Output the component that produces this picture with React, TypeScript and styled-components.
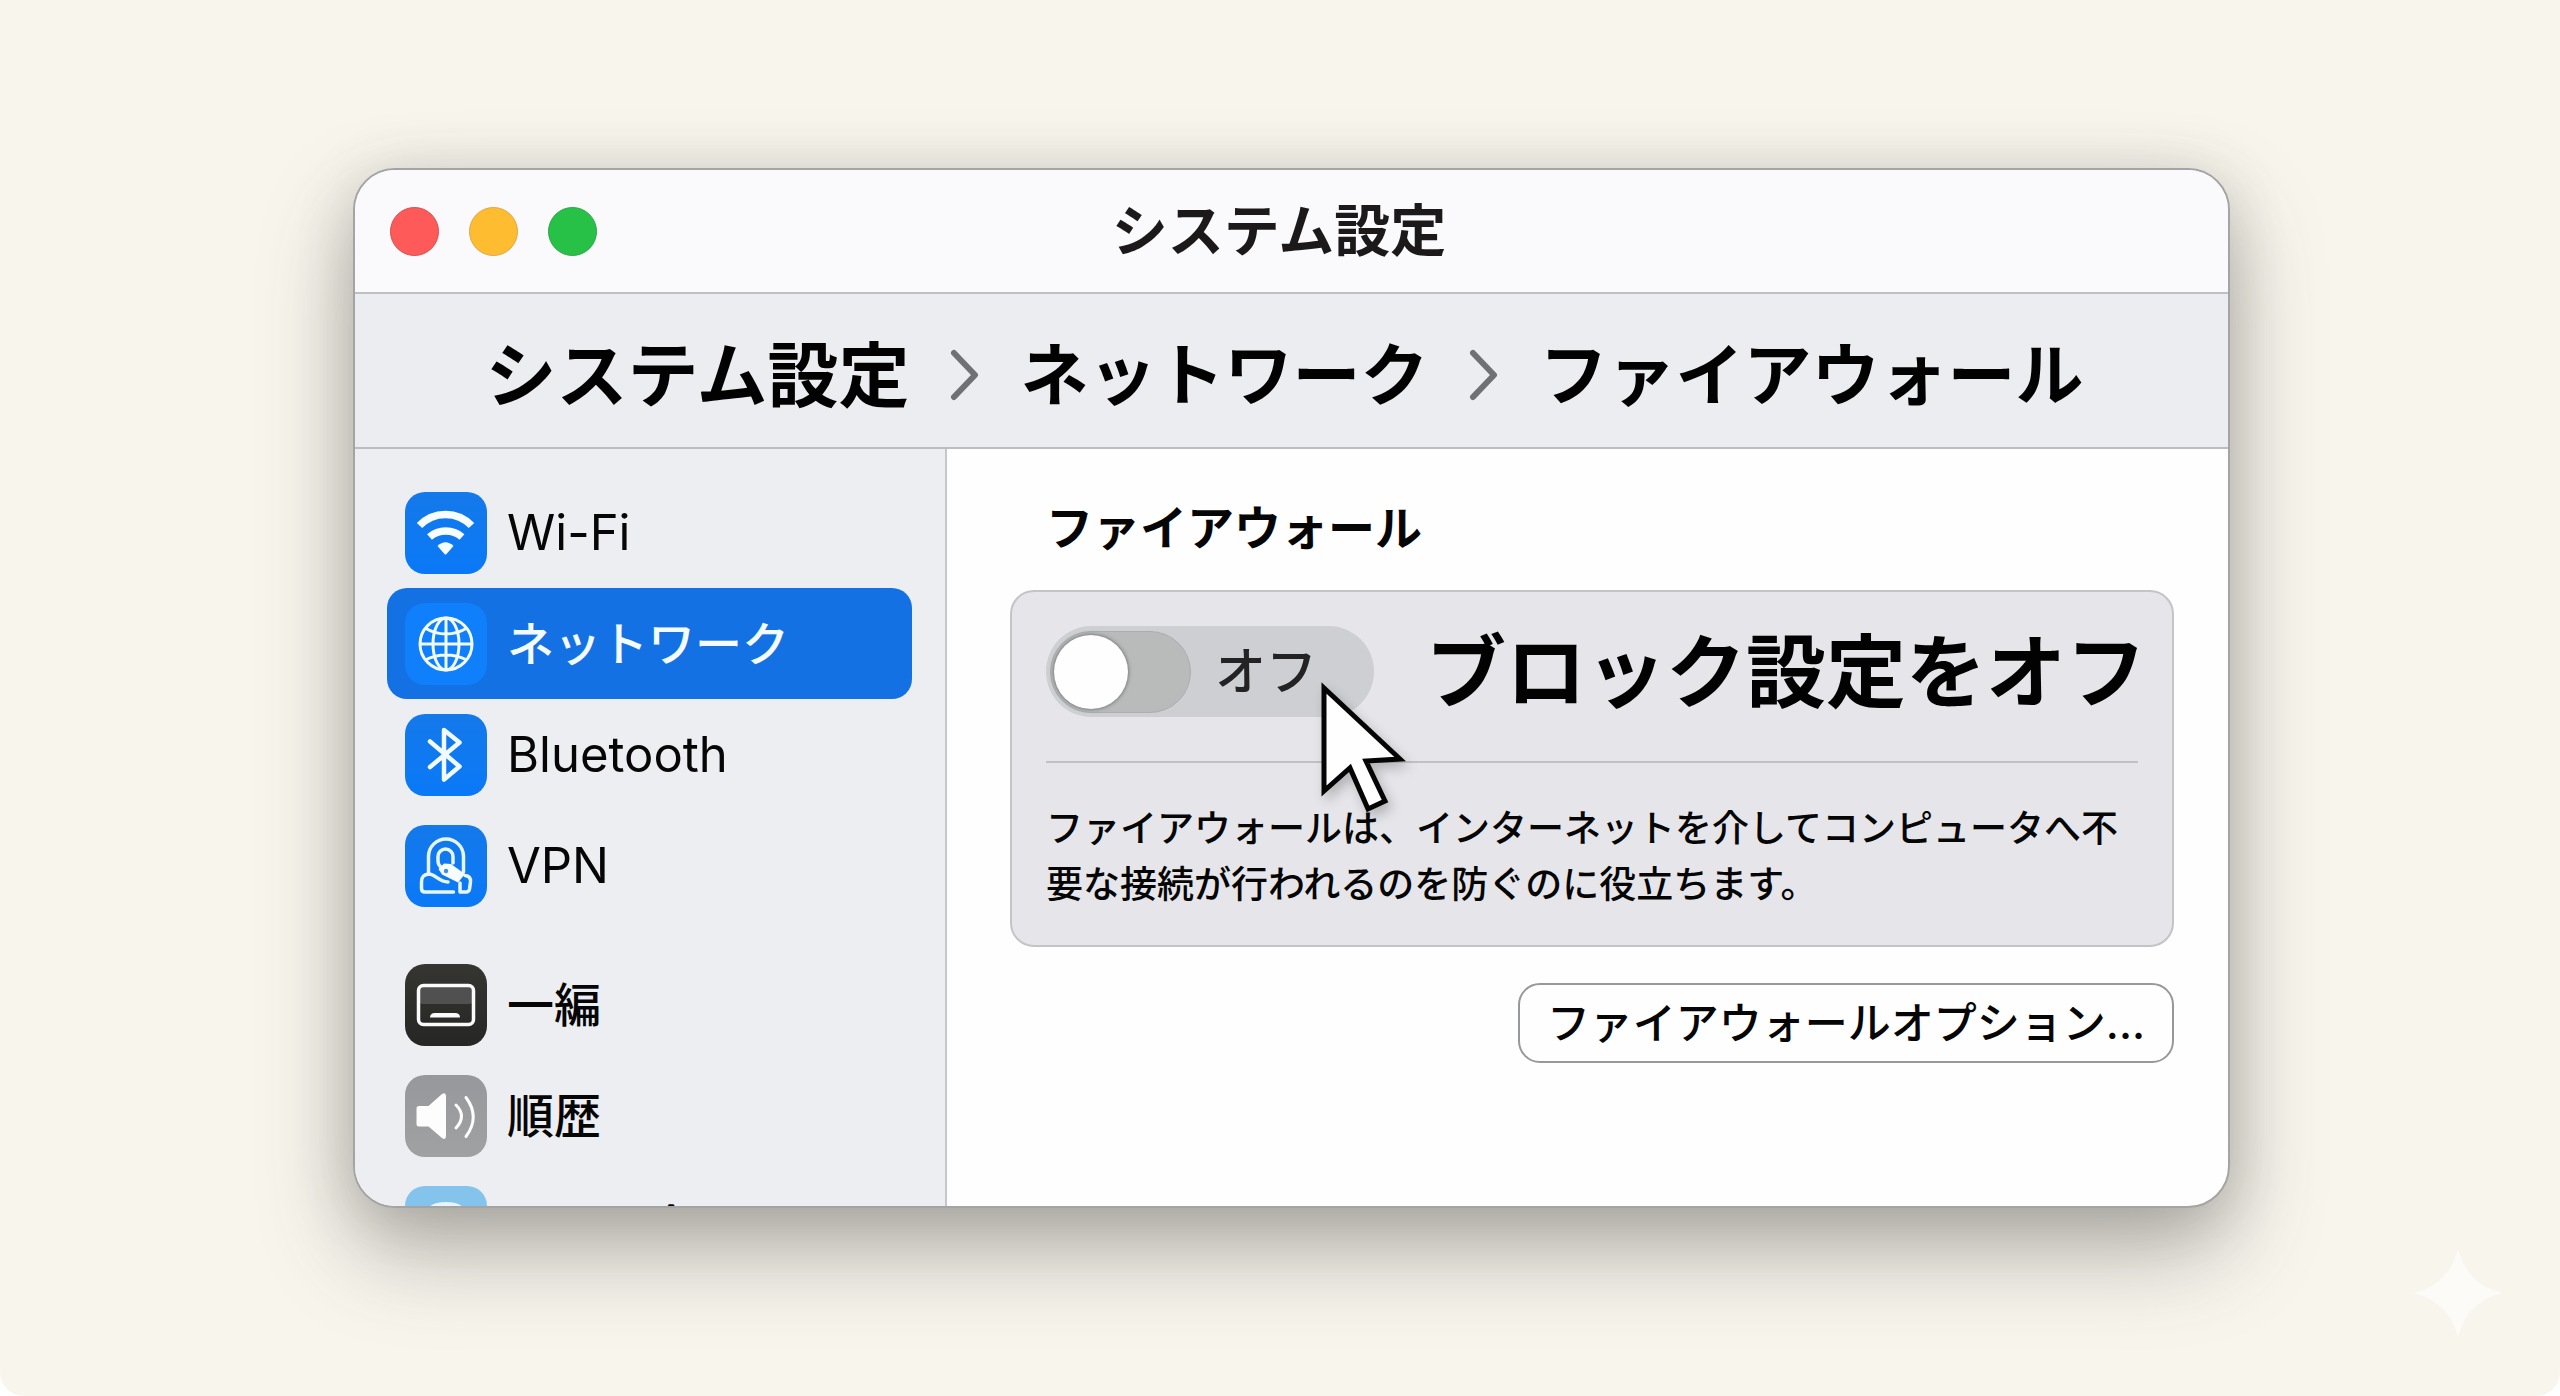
import React from "react";
import styled, { createGlobalStyle } from "styled-components";

const GlobalStyle = createGlobalStyle`
  *, *::before, *::after { box-sizing: border-box; }
  body {
    margin: 0;
    background: #ffffff;
    color: #060606;
    font-family: Inter, "Noto Sans CJK JP", sans-serif;
  }
  h1, h2, p, ul, ol { margin: 0; padding: 0; }
  ul, ol { list-style: none; }
  a { color: inherit; text-decoration: none; }
  button { font: inherit; color: inherit; }
  svg { display: block; flex: none; }
`;

const Desktop = styled.div`
  position: relative;
  display: flex;
  height: 100vh;
  min-height: 900px;
  padding: 168px 330px 188px 353px;
  background: #f8f5ed;
  border-radius: 0 0 24px 24px;
  overflow: hidden;
`;

const Window = styled.main`
  flex: 1;
  min-width: 0;
  display: flex;
  flex-direction: column;
  border: 2px solid #a3a4a3;
  border-radius: 42px;
  overflow: hidden;
  background: #fefefe;
  box-shadow:
    0 42px 90px rgba(70, 70, 66, 0.4),
    0 6px 56px rgba(84, 84, 74, 0.18);
`;

const TitleBar = styled.header`
  display: grid;
  grid-template-columns: 1fr auto 1fr;
  align-items: center;
  height: 124px;
  flex: none;
  padding: 0 60px 0 35px;
  background: #fafafd;
  border-bottom: 2px solid #bfc0c4;
`;

const Lights = styled.div`
  display: flex;
  gap: 30px;
`;

const Light = styled.button<{ $color: string; $edge: string }>`
  width: 49px;
  height: 49px;
  padding: 0;
  border: 1px solid ${(p) => p.$edge};
  border-radius: 50%;
  background: ${(p) => p.$color};
`;

const WindowTitle = styled.h1`
  font-size: 56px;
  line-height: 64px;
  font-weight: 700;
  color: #1b191a;
`;

const PathBar = styled.nav`
  flex: none;
  height: 155px;
  padding: 8px 14px 0 0;
  display: flex;
  align-items: center;
  justify-content: center;
  background: #ecedf1;
  border-bottom: 2px solid #bcbdc1;
`;

const PathList = styled.ol`
  display: flex;
  align-items: center;
  gap: 41px;
`;

const PathItem = styled.li<{ $root: boolean }>`
  display: flex;
  align-items: center;
  gap: 41px;
  font-size: ${(p) => (p.$root ? "71px" : "68px")};
  line-height: 80px;
  font-weight: 700;
  white-space: nowrap;
  color: #020202;
`;

const Body = styled.div`
  flex: 1;
  min-height: 0;
  display: grid;
  grid-template-columns: 592px minmax(0, 1fr);
`;

const Sidebar = styled.nav`
  min-height: 0;
  overflow: hidden;
  padding: 28px 33px 0 32px;
  background: #edeef2;
  border-right: 2px solid #c6c7ca;
`;

const NavGroup = styled.ul`
  & + & { margin-top: 28px; }
`;

const NavLink = styled.a<{ $active?: boolean; $latin?: boolean }>`
  display: flex;
  align-items: center;
  gap: 20px;
  height: 111px;
  padding: 0 18px;
  border-radius: 20px;
  font-size: ${(p) => (p.$latin ? "49px" : "47px")};
  font-weight: ${(p) => (p.$latin ? 400 : 500)};
  line-height: 64px;
  white-space: nowrap;
  background: ${(p) => (p.$active ? "#1471e4" : "transparent")};
  color: ${(p) => (p.$active ? "#f4fbff" : "#060606")};
`;

const Tile = styled.span<{ $fill: string }>`
  flex: none;
  width: 82px;
  height: 82px;
  border-radius: 20px;
  background: ${(p) => p.$fill};
`;

const Content = styled.section`
  padding: 39px 54px 40px 63px;
  display: flex;
  flex-direction: column;
`;

const SectionTitle = styled.h2`
  padding-left: 36px;
  font-size: 47px;
  line-height: 80px;
  font-weight: 700;
`;

const Card = styled.div`
  margin-top: 22px;
  padding: 34px 34px 32px;
  background: #e6e6ea;
  border: 2px solid #c3c4c7;
  border-radius: 24px;
`;

const SettingRow = styled.div`
  display: flex;
  align-items: center;
  gap: 52px;
  padding-bottom: 44px;
  border-bottom: 2px solid #c0c1c4;
`;

const SwitchPill = styled.label`
  position: relative;
  flex: none;
  display: flex;
  align-items: center;
  gap: 24px;
  width: 328px;
  height: 91px;
  padding-left: 4px;
  border-radius: 46px;
  background: #cecfd2;
  font-size: 51px;
  line-height: 64px;
  font-weight: 500;
  color: #232325;
`;

const Switch = styled.input`
  appearance: none;
  flex: none;
  margin: 0;
  width: 141px;
  height: 82px;
  padding: 3px;
  border-radius: 41px;
  border: 1px solid #acadad;
  background: #b9baba;

  &::before {
    content: "";
    display: block;
    width: 74px;
    height: 74px;
    border-radius: 50%;
    background: #fefefe;
    box-shadow: 0 0 4px rgba(0, 0, 0, 0.5);
  }
`;

const Pointer = styled.svg`
  position: absolute;
  left: 270px;
  top: 52px;
  z-index: 1;
  filter: drop-shadow(4px 6px 6px rgba(0, 0, 0, 0.22));
`;

const Callout = styled.p`
  font-size: 80px;
  line-height: 90px;
  font-weight: 700;
  white-space: nowrap;
  color: #020202;
`;

const Description = styled.p`
  margin-top: 38px;
  font-size: 37px;
  line-height: 56px;
  font-weight: 500;
  line-break: anywhere;
`;

const OptionsButton = styled.button`
  align-self: flex-end;
  margin-top: 36px;
  height: 80px;
  padding: 0 27px;
  border: 2px solid #97989a;
  border-radius: 22px;
  background: #fefefe;
  font-size: 43px;
  line-height: 56px;
  font-weight: 500;
  white-space: nowrap;
`;

const Sparkle = styled.svg`
  position: absolute;
  right: 57px;
  bottom: 58px;
`;

const Icon = ({ children }: { children: React.ReactNode }) => (
  <svg width="82" height="82" viewBox="0 0 82 82" fill="none" aria-hidden="true">
    {children}
  </svg>
);

const WifiIcon = () => (
  <Icon>
    <g stroke="#f6fcff">
      <path d="M14.5 33.5A36 36 0 0 1 66.5 33.5" strokeWidth="7.5" />
      <path d="M24.5 45A25 25 0 0 1 57 45" strokeWidth="7.5" />
    </g>
    <path d="M32.5 54Q40.5 46.5 48.5 54L41.5 62Q40.5 63 39.5 62Z" fill="#f6fcff" />
  </Icon>
);

const GlobeIcon = () => (
  <Icon>
    <g stroke="#f0faff" strokeWidth="3">
      <circle cx="41" cy="41" r="26" />
      <ellipse cx="41" cy="41" rx="13" ry="26" />
      <path d="M41 15V67M15 41H67M20 25Q30 31 41 31Q52 31 62 25M20 57Q30 52 41 52Q52 52 62 57" />
    </g>
  </Icon>
);

const BluetoothIcon = () => (
  <Icon>
    <path
      d="M25 27.5L54.5 52.5L39 65.5V16L54.5 28.5L25 53"
      stroke="#f0faff"
      strokeWidth="4.5"
      strokeLinejoin="round"
      strokeLinecap="round"
    />
  </Icon>
);

const VpnIcon = () => (
  <Icon>
    <g stroke="#e6f6ff" strokeWidth="3.5" strokeLinecap="round" strokeLinejoin="round">
      <path d="M23.5 49V31.5A17.5 17.5 0 0 1 58.5 31.5V47" />
      <path d="M36 42Q33 40 33 36V31.5A7.5 7.5 0 0 1 48 31.5V38" />
      <path d="M24 49C17.5 49.5 16.5 53 16.5 57V63.5Q16.5 67 20 67H48.5" />
      <path d="M24 49C30 49 34 57 43 57" />
      <path d="M60 50.5Q66 51 65.5 57L64.5 64Q64 67 61 67H55V58" />
    </g>
    <path d="M33.5 44L39 38.5L46 39L60 49L53 57.5L37 49.5Z" fill="#f6fcff" />
    <circle cx="41" cy="46" r="2.2" fill="#3c8fe8" />
  </Icon>
);

const DisplayIcon = () => (
  <Icon>
    <rect x="14" y="22" width="54" height="18" rx="4" fill="#505050" />
    <rect x="13.5" y="21.5" width="55" height="39" rx="5" stroke="#fbfbfb" strokeWidth="3.5" />
    <path d="M25 53.5Q25 49 30 49H50Q55 49 55 53.5Z" fill="#fbfbfb" />
  </Icon>
);

const SpeakerIcon = () => (
  <Icon>
    <path
      d="M14 31H23.5L37 19Q41 17 41 21V61Q41 65.5 37 63L23.5 51.5H14Q11.5 51.5 11.5 49V33.5Q11.5 31 14 31Z"
      fill="#fdfdfd"
    />
    <g stroke="#fdfdfd" strokeWidth="3" strokeLinecap="round">
      <path d="M51 30Q62 41 51 53" />
      <path d="M61 22.5Q75.5 42 61 61.5" />
    </g>
  </Icon>
);

const CloudIcon = () => (
  <Icon>
    <path d="M22 24Q26 16 41 16Q56 16 60 24V50H22Z" fill="#e8f5fd" />
  </Icon>
);

const Chevron = () => (
  <svg width="29" height="52" viewBox="0 0 29 52" fill="none" aria-hidden="true">
    <path d="M4 4L25 26L4 48" stroke="#707175" strokeWidth="6" strokeLinecap="round" strokeLinejoin="round" />
  </svg>
);

const BLUE = "linear-gradient(#1479ea, #0a79f7)";

type Item = {
  label: string;
  fill: string;
  icon: React.ReactNode;
  active?: boolean;
  latin?: boolean;
};

const groups: Item[][] = [
  [
    { label: "Wi-Fi", fill: BLUE, icon: <WifiIcon />, latin: true },
    { label: "ネットワーク", fill: "#0f7ffb", icon: <GlobeIcon />, active: true },
    { label: "Bluetooth", fill: BLUE, icon: <BluetoothIcon />, latin: true },
    { label: "VPN", fill: BLUE, icon: <VpnIcon />, latin: true },
  ],
  [
    { label: "一編", fill: "linear-gradient(#353532, #262624)", icon: <DisplayIcon /> },
    { label: "順歴", fill: "linear-gradient(#97989b, #a0a1a3)", icon: <SpeakerIcon /> },
    { label: "う百ー介", fill: "#84c4ec", icon: <CloudIcon /> },
  ],
];

const trail = ["システム設定", "ネットワーク", "ファイアウォール"];

export default function App() {
  return (
    <Desktop>
      <GlobalStyle />
      <Window>
        <TitleBar>
          <Lights>
            <Light type="button" aria-label="閉じる" $color="#fe5a59" $edge="#d2504f" />
            <Light type="button" aria-label="しまう" $color="#febc30" $edge="#d9a94a" />
            <Light type="button" aria-label="拡大" $color="#27c148" $edge="#2fa548" />
          </Lights>
          <WindowTitle>システム設定</WindowTitle>
        </TitleBar>
        <PathBar aria-label="現在の場所">
          <PathList>
            {trail.map((name, i) => (
              <PathItem key={name} $root={i === 0}>
                {i > 0 && <Chevron />}
                <a href="#">{name}</a>
              </PathItem>
            ))}
          </PathList>
        </PathBar>
        <Body>
          <Sidebar aria-label="設定項目">
            {groups.map((items, g) => (
              <NavGroup key={g}>
                {items.map((item) => (
                  <li key={item.label}>
                    <NavLink href="#" $active={item.active} $latin={item.latin}>
                      <Tile $fill={item.fill}>{item.icon}</Tile>
                      {item.label}
                    </NavLink>
                  </li>
                ))}
              </NavGroup>
            ))}
          </Sidebar>
          <Content>
            <SectionTitle>ファイアウォール</SectionTitle>
            <Card>
              <SettingRow>
                <SwitchPill>
                  <Switch type="checkbox" role="switch" />
                  オフ
                  <Pointer width="92" height="142" viewBox="0 0 92 142" aria-hidden="true">
                    <path
                      d="M8 10L84 81L50 83L69 123L52 131L34 90L8 113Z"
                      fill="#fefefe"
                      stroke="#050505"
                      strokeWidth="5"
                    />
                  </Pointer>
                </SwitchPill>
                <Callout>ブロック設定をオフ</Callout>
              </SettingRow>
              <Description>
                ファイアウォールは、インターネットを介してコンピュータへ不要な接続が行われるのを防ぐのに役立ちます。
              </Description>
            </Card>
            <OptionsButton type="button">ファイアウォールオプション...</OptionsButton>
          </Content>
        </Body>
      </Window>
      <Sparkle width="90" height="90" viewBox="0 0 90 90" aria-hidden="true">
        <path d="M45 1Q54 36 89 45Q54 54 45 89Q36 54 1 45Q36 36 45 1Z" fill="#fcfbf8" />
      </Sparkle>
    </Desktop>
  );
}
